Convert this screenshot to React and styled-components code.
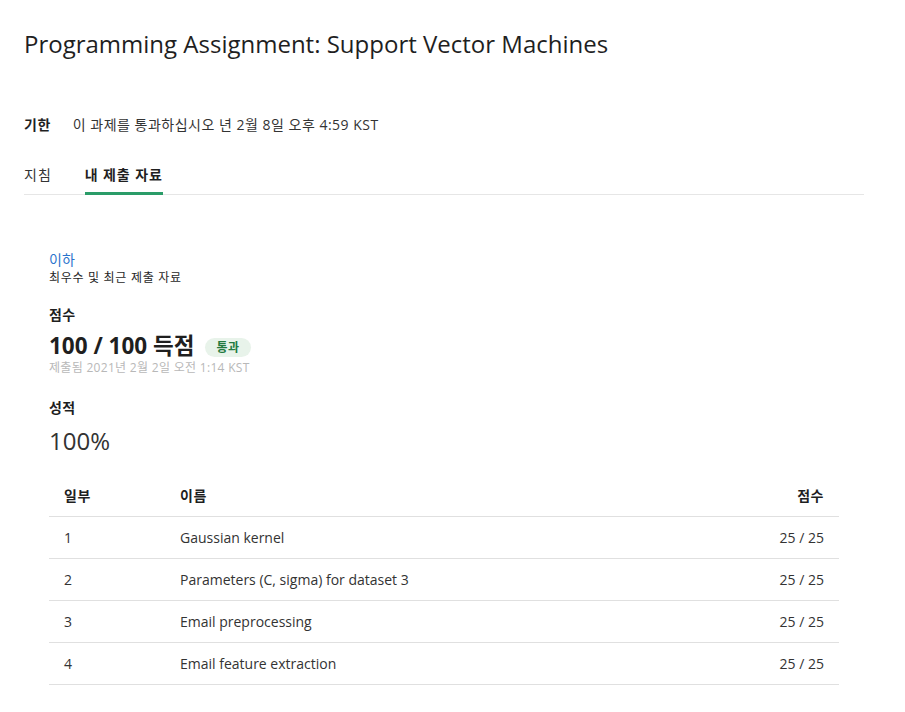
import React from 'react';
import styled, { createGlobalStyle } from 'styled-components';

const GlobalStyle = createGlobalStyle`
  body {
    margin: 0;
    background: #fff;
    font-family: 'Open Sans', 'Noto Sans CJK KR', sans-serif;
    color: #1f1f1f;
  }
`;

const Page = styled.div`
  padding: 26px 41px 0 24px;
`;

const Title = styled.h1`
  margin: 0;
  font-size: 24px;
  font-weight: 400;
  line-height: 36px;
  color: #1f1f1f;
`;

const DueRow = styled.div`
  display: flex;
  gap: 22px;
  margin-top: 53px;
  font-size: 14px;
  line-height: 20px;
`;

const DueLabel = styled.span`
  font-weight: 700;
  letter-spacing: 0.5px;
`;

const DueText = styled.span`
  color: #333;
  letter-spacing: 0.5px;
`;

const Tabs = styled.div`
  display: flex;
  gap: 33px;
  margin-top: 30px;
  border-bottom: 1px solid #e6e6e6;
`;

const Tab = styled.div`
  font-size: 14px;
  line-height: 20px;
  padding-bottom: 7px;
  letter-spacing: ${p => (p.$active ? '0.9px' : '1px')};
  color: ${p => (p.$active ? '#1f1f1f' : '#333')};
  font-weight: ${p => (p.$active ? 700 : 400)};
  border-bottom: 3px solid ${p => (p.$active ? '#2a9c68' : 'transparent')};
  margin-bottom: -1px;
`;

const Content = styled.div`
  padding: 56px 25px 0 25px;
`;

const Link = styled.a`
  display: block;
  font-size: 14px;
  line-height: 18px;
  color: #2a73cc;
  text-decoration: none;
`;

const Note = styled.div`
  font-size: 12px;
  line-height: 18px;
  letter-spacing: 0.7px;
  color: #1f1f1f;
`;

const Label = styled.div`
  margin-top: ${p => p.$top || 20}px;
  font-size: 14px;
  font-weight: 700;
  line-height: 20px;
  letter-spacing: 0.4px;
`;

const ScoreRow = styled.div`
  display: flex;
  align-items: center;
  gap: 11px;
  margin-top: 6px;
`;

const Score = styled.div`
  font-size: 22.5px;
  font-weight: 700;
  line-height: 30px;
`;

const Badge = styled.span`
  background: #e8f3ea;
  color: #237a40;
  font-size: 12px;
  font-weight: 700;
  line-height: 17px;
  padding: 1px 11px;
  border-radius: 10px;
  margin-top: 3px;
  letter-spacing: 0.5px;
`;

const Submitted = styled.div`
  font-size: 12px;
  line-height: 14px;
  letter-spacing: 0.3px;
  color: #b8b8b8;
`;

const Grade = styled.div`
  margin-top: 8px;
  font-size: 24px;
  line-height: 30px;
  color: #333;
`;

const Table = styled.table`
  margin-top: 18px;
  width: 790px;
  border-collapse: collapse;
  font-size: 14px;
`;

const Th = styled.th`
  text-align: ${p => p.$right ? 'right' : 'left'};
  font-weight: 700;
  padding: 10px 15px;
  height: 42px;
  box-sizing: border-box;
  letter-spacing: 0.5px;
  border-bottom: 1px solid #e0e0e0;
  width: ${p => p.$w || 'auto'};
`;

const Td = styled.td`
  text-align: ${p => p.$right ? 'right' : 'left'};
  color: #333;
  padding: 10px 15px;
  height: 42px;
  box-sizing: border-box;
  border-bottom: 1px solid #e0e0e0;
`;

const parts = [
  ['1', 'Gaussian kernel', '25 / 25'],
  ['2', 'Parameters (C, sigma) for dataset 3', '25 / 25'],
  ['3', 'Email preprocessing', '25 / 25'],
  ['4', 'Email feature extraction', '25 / 25'],
];

export default function App() {
  return (
    <>
      <GlobalStyle />
      <Page>
        <Title>Programming Assignment: Support Vector Machines</Title>
        <DueRow>
          <DueLabel>기한</DueLabel>
          <DueText>이 과제를 통과하십시오 년 2월 8일 오후 4:59 KST</DueText>
        </DueRow>
        <Tabs>
          <Tab>지침</Tab>
          <Tab $active>내 제출 자료</Tab>
        </Tabs>
        <Content>
          <Link href="#">이하</Link>
          <Note>최우수 및 최근 제출 자료</Note>
          <Label $top={18}>점수</Label>
          <ScoreRow>
            <Score>100 / 100 득점</Score>
            <Badge>통과</Badge>
          </ScoreRow>
          <Submitted>제출됨 2021년 2월 2일 오전 1:14 KST</Submitted>
          <Label $top={23}>성적</Label>
          <Grade>100%</Grade>
          <Table>
            <thead>
              <tr>
                <Th $w="116px">일부</Th>
                <Th>이름</Th>
                <Th $right>점수</Th>
              </tr>
            </thead>
            <tbody>
              {parts.map(([n, name, s]) => (
                <tr key={n}>
                  <Td>{n}</Td>
                  <Td>{name}</Td>
                  <Td $right>{s}</Td>
                </tr>
              ))}
            </tbody>
          </Table>
        </Content>
      </Page>
    </>
  );
}
